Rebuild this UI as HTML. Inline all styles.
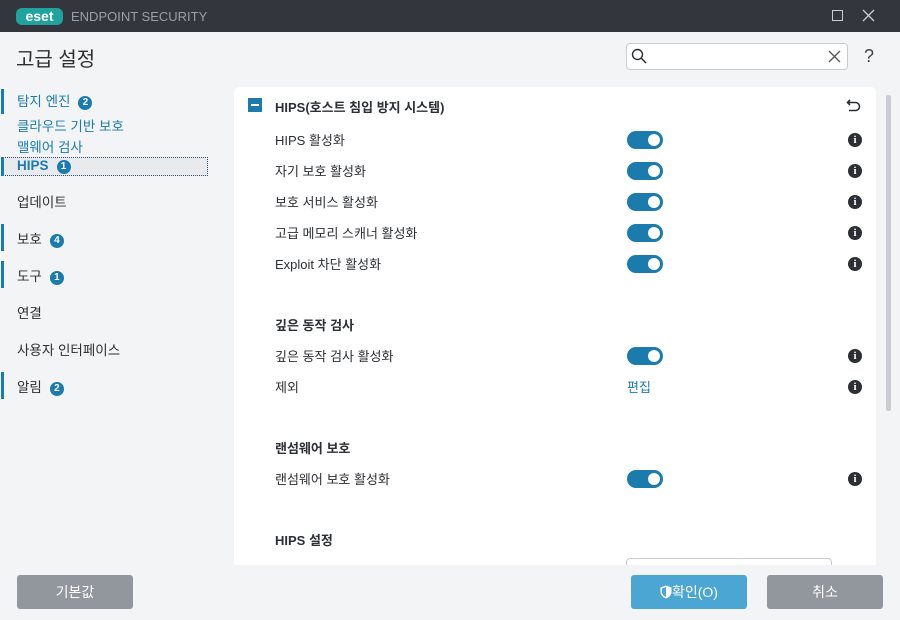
<!DOCTYPE html>
<html><head><meta charset="utf-8"><style>
*{margin:0;padding:0;box-sizing:border-box}
body{width:900px;height:620px;background:#f3f4f6;font-family:"Liberation Sans","Noto Sans CJK KR",sans-serif;position:relative;overflow:hidden;color:#2c2f33}
.tb{position:absolute;left:0;top:0;width:900px;height:32px;background:#33363d}
.abs{position:absolute}
.nav{position:absolute;left:17px;font-size:13.5px;white-space:nowrap}
.bar{position:absolute;left:1px;width:3px;background:#1a7bac}
.badge{display:inline-block;width:14px;height:14px;border-radius:7px;background:#1a7bac;color:#fff;font-size:10px;font-weight:bold;text-align:center;line-height:14px;margin-left:8px;vertical-align:1px}
.blue{color:#1a7bac}
.card{position:absolute;left:234px;top:87px;width:642px;height:478px;background:#fff;border-radius:5px 5px 0 0}
.row{position:absolute;left:275px;font-size:13px}
.tg{position:absolute;left:627px;width:36px;height:18px;border-radius:9px;background:#1a7bac}
.tg:after{content:"";position:absolute;right:3px;top:3px;width:12px;height:12px;border-radius:50%;background:#fff}
.info{position:absolute;left:848px;width:14px;height:14px;border-radius:50%;background:#2c2f33;color:#fff;font-size:11px;font-weight:bold;text-align:center;line-height:14px;font-family:"Liberation Serif",serif}
.sec{position:absolute;left:275px;font-size:13px;font-weight:bold}
.btn{position:absolute;top:575px;height:34px;border-radius:3px;color:#fff;font-size:14px;text-align:center;line-height:34px}
</style></head><body>
<div class="tb">
 <div class="abs" style="left:16px;top:8px;width:47px;height:17px;border-radius:6px;background:#20a39e;color:#fff;font-weight:bold;font-size:14px;line-height:17px;text-align:center">eset</div>
 <div class="abs" style="left:71px;top:9px;color:#9a9ea6;font-size:13px">ENDPOINT SECURITY</div>
 <div class="abs" style="left:832px;top:10px;width:11px;height:11px;border:1px solid #c9ccd1"></div>
 <svg class="abs" style="left:862px;top:9px" width="13" height="13"><path d="M1 1L12 12M12 1L1 12" stroke="#c9ccd1" stroke-width="1.3"/></svg>
</div>
<div class="abs" style="left:16px;top:43px;font-size:20px">고급 설정</div>
<div class="abs" style="left:626px;top:43px;width:222px;height:27px;border:1px solid #c9ccd1;border-radius:4px;background:#fff"></div>
<svg class="abs" style="left:631px;top:48px" width="16" height="16"><circle cx="6.5" cy="6.5" r="5" fill="none" stroke="#2c2f33" stroke-width="1.4"/><path d="M10 10L15 15" stroke="#2c2f33" stroke-width="1.5"/></svg>
<svg class="abs" style="left:828px;top:50px" width="13" height="13"><path d="M1 1L12 12M12 1L1 12" stroke="#555" stroke-width="1.3"/></svg>
<div class="abs" style="left:864px;top:46px;font-size:18px;color:#444">?</div>

<div class="bar" style="top:89px;height:25px"></div>
<div class="nav blue" style="top:90px">탐지 엔진<span class="badge">2</span></div>
<div class="nav blue" style="top:115px">클라우드 기반 보호</div>
<div class="nav blue" style="top:136px">맬웨어 검사</div>
<div class="abs" style="left:1px;top:157px;width:207px;height:19px;border:1px dotted #2c4f6e;background:#e8eaed"></div>
<div class="bar" style="top:157px;height:19px"></div>
<div class="nav blue" style="top:158px;font-weight:bold">HIPS<span class="badge">1</span></div>
<div class="nav" style="top:191px">업데이트</div>
<div class="bar" style="top:224px;height:27px"></div>
<div class="nav" style="top:228px">보호<span class="badge">4</span></div>
<div class="bar" style="top:261px;height:27px"></div>
<div class="nav" style="top:265px">도구<span class="badge">1</span></div>
<div class="nav" style="top:302px">연결</div>
<div class="nav" style="top:339px">사용자 인터페이스</div>
<div class="bar" style="top:372px;height:27px"></div>
<div class="nav" style="top:376px">알림<span class="badge">2</span></div>

<div class="card"></div>
<div class="abs" style="left:248px;top:98px;width:14px;height:14px;background:#1a7bac"><div style="position:absolute;left:3px;top:6px;width:8px;height:2px;background:#fff"></div></div>
<div class="sec" style="top:97px">HIPS(호스트 침입 방지 시스템)</div>
<svg class="abs" style="left:846px;top:98px" width="16" height="16"><path d="M4 2L1.5 4.5L4 7M1.5 4.5H9.5a4 4 0 0 1 0 8H3" fill="none" stroke="#2c2f33" stroke-width="1.6"/></svg>

<div class="row" style="top:130px">HIPS 활성화</div><div class="tg" style="top:131px"></div><div class="info" style="top:133px">i</div>
<div class="row" style="top:161px">자기 보호 활성화</div><div class="tg" style="top:162px"></div><div class="info" style="top:164px">i</div>
<div class="row" style="top:192px">보호 서비스 활성화</div><div class="tg" style="top:193px"></div><div class="info" style="top:195px">i</div>
<div class="row" style="top:223px">고급 메모리 스캐너 활성화</div><div class="tg" style="top:224px"></div><div class="info" style="top:226px">i</div>
<div class="row" style="top:254px">Exploit 차단 활성화</div><div class="tg" style="top:255px"></div><div class="info" style="top:257px">i</div>
<div class="sec" style="top:315px">깊은 동작 검사</div>
<div class="row" style="top:346px">깊은 동작 검사 활성화</div><div class="tg" style="top:347px"></div><div class="info" style="top:349px">i</div>
<div class="row" style="top:377px">제외</div><div class="abs blue" style="left:627px;top:377px;font-size:13px">편집</div><div class="info" style="top:380px">i</div>
<div class="sec" style="top:438px">랜섬웨어 보호</div>
<div class="row" style="top:469px">랜섬웨어 보호 활성화</div><div class="tg" style="top:470px"></div><div class="info" style="top:472px">i</div>
<div class="sec" style="top:530px">HIPS 설정</div>
<div class="abs" style="left:626px;top:558px;width:206px;height:12px;border:1px solid #c9ccd1;border-radius:4px;background:#fff"></div>
<div class="abs" style="left:886px;top:95px;width:5px;height:316px;background:#c9ccd1;border-radius:2px"></div>

<div class="abs" style="left:0;top:565px;width:900px;height:55px;background:#f3f4f6"></div>
<div class="btn" style="left:17px;width:116px;background:#92979e">기본값</div>
<div class="btn" style="left:631px;width:116px;background:#4ba6d4">
<svg style="vertical-align:-2px" width="12" height="14"><path d="M6 0.5L11.5 2.5V7c0 3-2.5 5.5-5.5 6.5C3 12.5.5 10 .5 7V2.5Z" fill="#fff"/><path d="M6 2V12C4 11 2 9.5 2 7V3.5Z" fill="#4ba6d4"/></svg>확인(O)</div>
<div class="btn" style="left:767px;width:116px;background:#92979e">취소</div>
</body></html>
